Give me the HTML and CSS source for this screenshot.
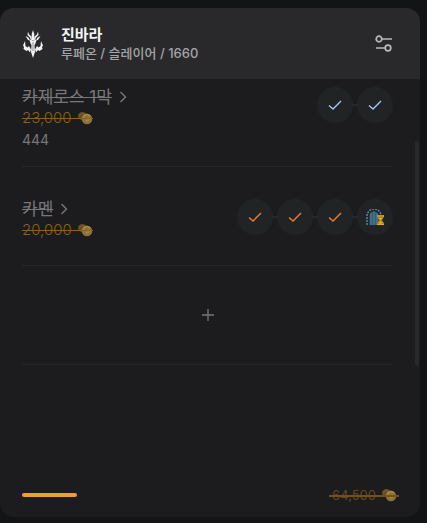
FILE: index.html
```html
<!DOCTYPE html>
<html lang="ko">
<head>
  <meta charset="UTF-8">
  <meta name="viewport" content="width=device-width, initial-scale=1.0">
  <title>진바라</title>
  <link rel="stylesheet" href="styles.css">
</head>
<body>
  <svg class="defs" aria-hidden="true">
    <symbol id="check" viewBox="0 0 14 12"><path d="M1 6.5l4 3.5 8-8"/></symbol>
    <symbol id="chevron" viewBox="0 0 8 12"><path d="M1.5 1l5 5-5 5"/></symbol>
    <symbol id="coin" viewBox="0 0 16 14">
      <ellipse cx="5.5" cy="5" rx="4.5" ry="4" fill="#6b4a26"/>
      <path d="M2 4q3-3 7 0" fill="none" stroke="#80602f"/>
      <circle cx="10" cy="8" r="5.3" fill="#8c7134"/>
      <path d="M6 7a4 4 0 0 1 7-2" fill="none" stroke="#a58d49" stroke-width="1.4"/>
      <path d="M8 10l4-4 1 3-3 2z" fill="#a08342"/>
    </symbol>
  </svg>

  <main class="card">
    <header class="header">
      <svg class="emblem" viewBox="0 0 20 28" aria-hidden="true">
        <g fill="#f2f2f3">
          <path d="M10 0l1.3 4-.2 6h-2.200l-.2-6z"/>
          <path d="M5 1.500L4.500 5 7 7.500l1 3 1-1-.5-3L6 4.500zM15 1.500l.5 3.500L13 7.500l-1 3-1-1 .5-3L14 4.500z"/>
          <path d="M2.500 6l3 1.500 1.500 3-2-.5zM17.500 6l-3 1.500-1.500 3 2-.5z"/>
          <path d="M6.500 9.500l3.500 1 3.500-1-1 4-1 1.500.5 7L10 28l-2-6 .5-7-1-1.500z"/>
          <path d="M2 11L0 15.500l1 1.500-.5 2 3 2 1.500-1 2 2.500 1-3-2-3.500-1.500 1.500L2.500 16zM18 11l2 4.500-1 1.500.5 2-3 2-1.500-1-2 2.500-1-3 2-3.500 1.500 1.500 2-1.500z"/>
        </g>
        <path d="M10 12v9" stroke="#77777a" stroke-width=".8"/>
      </svg>
      <div class="who">
        <h1>진바라</h1>
        <p>루페온 / 슬레이어 / 1660</p>
      </div>
      <button class="settings" aria-label="설정">
        <svg viewBox="0 0 18 18"><circle cx="4" cy="4" r="2.8"/><path d="M7 4h10M1 13h9"/><circle cx="13" cy="13" r="2.8"/></svg>
      </button>
    </header>

    <section class="list">
      <article class="raid raid-first">
        <div class="info">
          <button class="name"><s>카제로스 1막</s><svg class="chevron"><use href="#chevron"/></svg></button>
          <div class="gold"><span>23,000</span><svg class="coin"><use href="#coin"/></svg></div>
          <p class="memo">444</p>
        </div>
        <div class="gates">
          <button class="gate hard" aria-label="1관문"><svg class="check"><use href="#check"/></svg></button>
          <button class="gate hard" aria-label="2관문"><svg class="check"><use href="#check"/></svg></button>
        </div>
      </article>

      <article class="raid">
        <div class="info">
          <button class="name"><s>카멘</s><svg class="chevron"><use href="#chevron"/></svg></button>
          <div class="gold"><span>20,000</span><svg class="coin"><use href="#coin"/></svg></div>
        </div>
        <div class="gates">
          <button class="gate" aria-label="1관문"><svg class="check"><use href="#check"/></svg></button>
          <button class="gate" aria-label="2관문"><svg class="check"><use href="#check"/></svg></button>
          <button class="gate" aria-label="3관문"><svg class="check"><use href="#check"/></svg></button>
          <button class="gate" aria-label="4관문">
            <svg class="waiting" viewBox="0 0 18 17">
              <path d="M1 16V7a7 7 0 0 1 14 0" fill="none" stroke="#60869c" stroke-width="1.5" stroke-dasharray="2 1"/>
              <path d="M3.5 16V7a4.500 4.500 0 0 1 9 0v9z" fill="#345f7b"/>
              <path d="M5 4v12M8 2v14M11 4v12" stroke="#5b87a1" stroke-width=".8"/>
              <path d="M11 6h7v2l-2 3 2 3v2h-7v-2l2-3-2-3z" fill="#ac8018"/>
              <path d="M11 7h7M11 15.5h7" stroke="#dfae20" stroke-width="1.2"/>
              <path d="M12.5 9h4l-2 2zM14.500 12l2 2.500h-4z" fill="#e3be3a"/>
            </svg>
          </button>
        </div>
      </article>

      <button class="add" aria-label="추가"><svg viewBox="0 0 12 12"><path d="M6 0v12M0 6h12"/></svg></button>
      <span class="scrollbar"></span>
    </section>

    <footer class="footer">
      <span class="progress"></span>
      <div class="gold total"><span>64,500</span><svg class="coin"><use href="#coin"/></svg></div>
    </footer>
  </main>
</body>
</html>
```
FILE: styles.css
```css
* {
  box-sizing: border-box;
}
body {
  margin: 0;
  padding: 8px 7px 6px 0;
  min-height: 100vh;
  display: flex;
  background: #131416;
  color: #77777b;
  font-family: Inter, "Noto Sans CJK KR", sans-serif;
}
h1, p {
  margin: 0;
}
button {
  padding: 0;
  border: 0;
  background: none;
  color: inherit;
  font: inherit;
  cursor: pointer;
}
svg {
  display: block;
}
.defs {
  position: absolute;
  width: 0;
  height: 0;
}
.card {
  flex: 1;
  display: flex;
  flex-direction: column;
  background: #1c1c1e;
  border-radius: 14px;
  overflow: hidden;
}
.header {
  display: flex;
  align-items: center;
  height: 71px;
  padding: 0 27px 0 23px;
  background: #29292b;
}
.emblem {
  width: 20px;
  height: 28px;
}
.who {
  flex: 1;
  margin-left: 18px;
}
.who h1 {
  font-size: 15px;
  line-height: 18px;
  font-weight: 700;
  color: #f4f4f5;
}
.who p {
  font-size: 13px;
  line-height: 18px;
  font-weight: 500;
  color: #a5a5a8;
}
.settings svg {
  width: 18px;
  height: 18px;
  fill: none;
  stroke: #b9b9bc;
  stroke-width: 1.7;
}
.list {
  flex: 1;
  position: relative;
  padding: 0 27px 0 22px;
}
.raid {
  display: flex;
  justify-content: space-between;
  align-items: flex-start;
  min-height: 99px;
  padding: 32px 0 14px;
  border-bottom: 1px solid #272729;
}
.raid-first {
  min-height: 88px;
  padding-top: 8px;
}
.name {
  display: flex;
  align-items: center;
  gap: 7px;
  font-size: 17px;
  line-height: 20px;
}
.chevron {
  width: 8px;
  height: 12px;
  fill: none;
  stroke: currentColor;
  stroke-width: 1.4;
}
.gold {
  position: relative;
  display: flex;
  align-items: center;
  gap: 5px;
  width: max-content;
  font-size: 15px;
  font-weight: 300;
  line-height: 22px;
  color: #8a5e1c;
}
.gold::after {
  content: "";
  position: absolute;
  left: 0;
  right: 0;
  top: 11px;
  height: 1px;
  background: #8d601b;
}
.coin {
  width: 16px;
  height: 14px;
}
.memo {
  font-size: 14px;
  line-height: 22px;
}
.gates {
  display: flex;
  gap: 4px;
}
.gate {
  position: relative;
  width: 36px;
  height: 36px;
  display: grid;
  place-items: center;
  border-radius: 50%;
  background: #212324;
  color: #e87f30;
}
.gate + .gate::before {
  content: "";
  position: absolute;
  left: -5px;
  top: 17px;
  width: 6px;
  height: 2px;
  background: #29292b;
}
.gate.hard {
  color: #9cc6f3;
}
.check {
  width: 14px;
  height: 12px;
  fill: none;
  stroke: currentColor;
  stroke-width: 1.4;
}
.waiting {
  width: 18px;
  height: 17px;
}
.add {
  display: grid;
  place-items: center;
  width: 100%;
  height: 99px;
  border-bottom: 1px solid #272729;
}
.add svg {
  width: 12px;
  height: 12px;
  stroke: #77777b;
  stroke-width: 1.3;
}
.scrollbar {
  position: absolute;
  right: 1px;
  top: 62px;
  width: 4px;
  height: 225px;
  border-radius: 2px;
  background: #29292b;
}
.footer {
  display: flex;
  justify-content: space-between;
  align-items: center;
  height: 44px;
  padding: 0 21px 0 22px;
}
.progress {
  width: 55px;
  height: 4px;
  border-radius: 2px;
  background: #e9a12c;
}
.total {
  padding: 0 2px 0 3px;
  font-size: 13px;
  font-weight: 400;
  line-height: 20px;
  color: #624721;
}
.total::after {
  top: 10px;
  height: 2px;
  background: #75501a;
}
```
